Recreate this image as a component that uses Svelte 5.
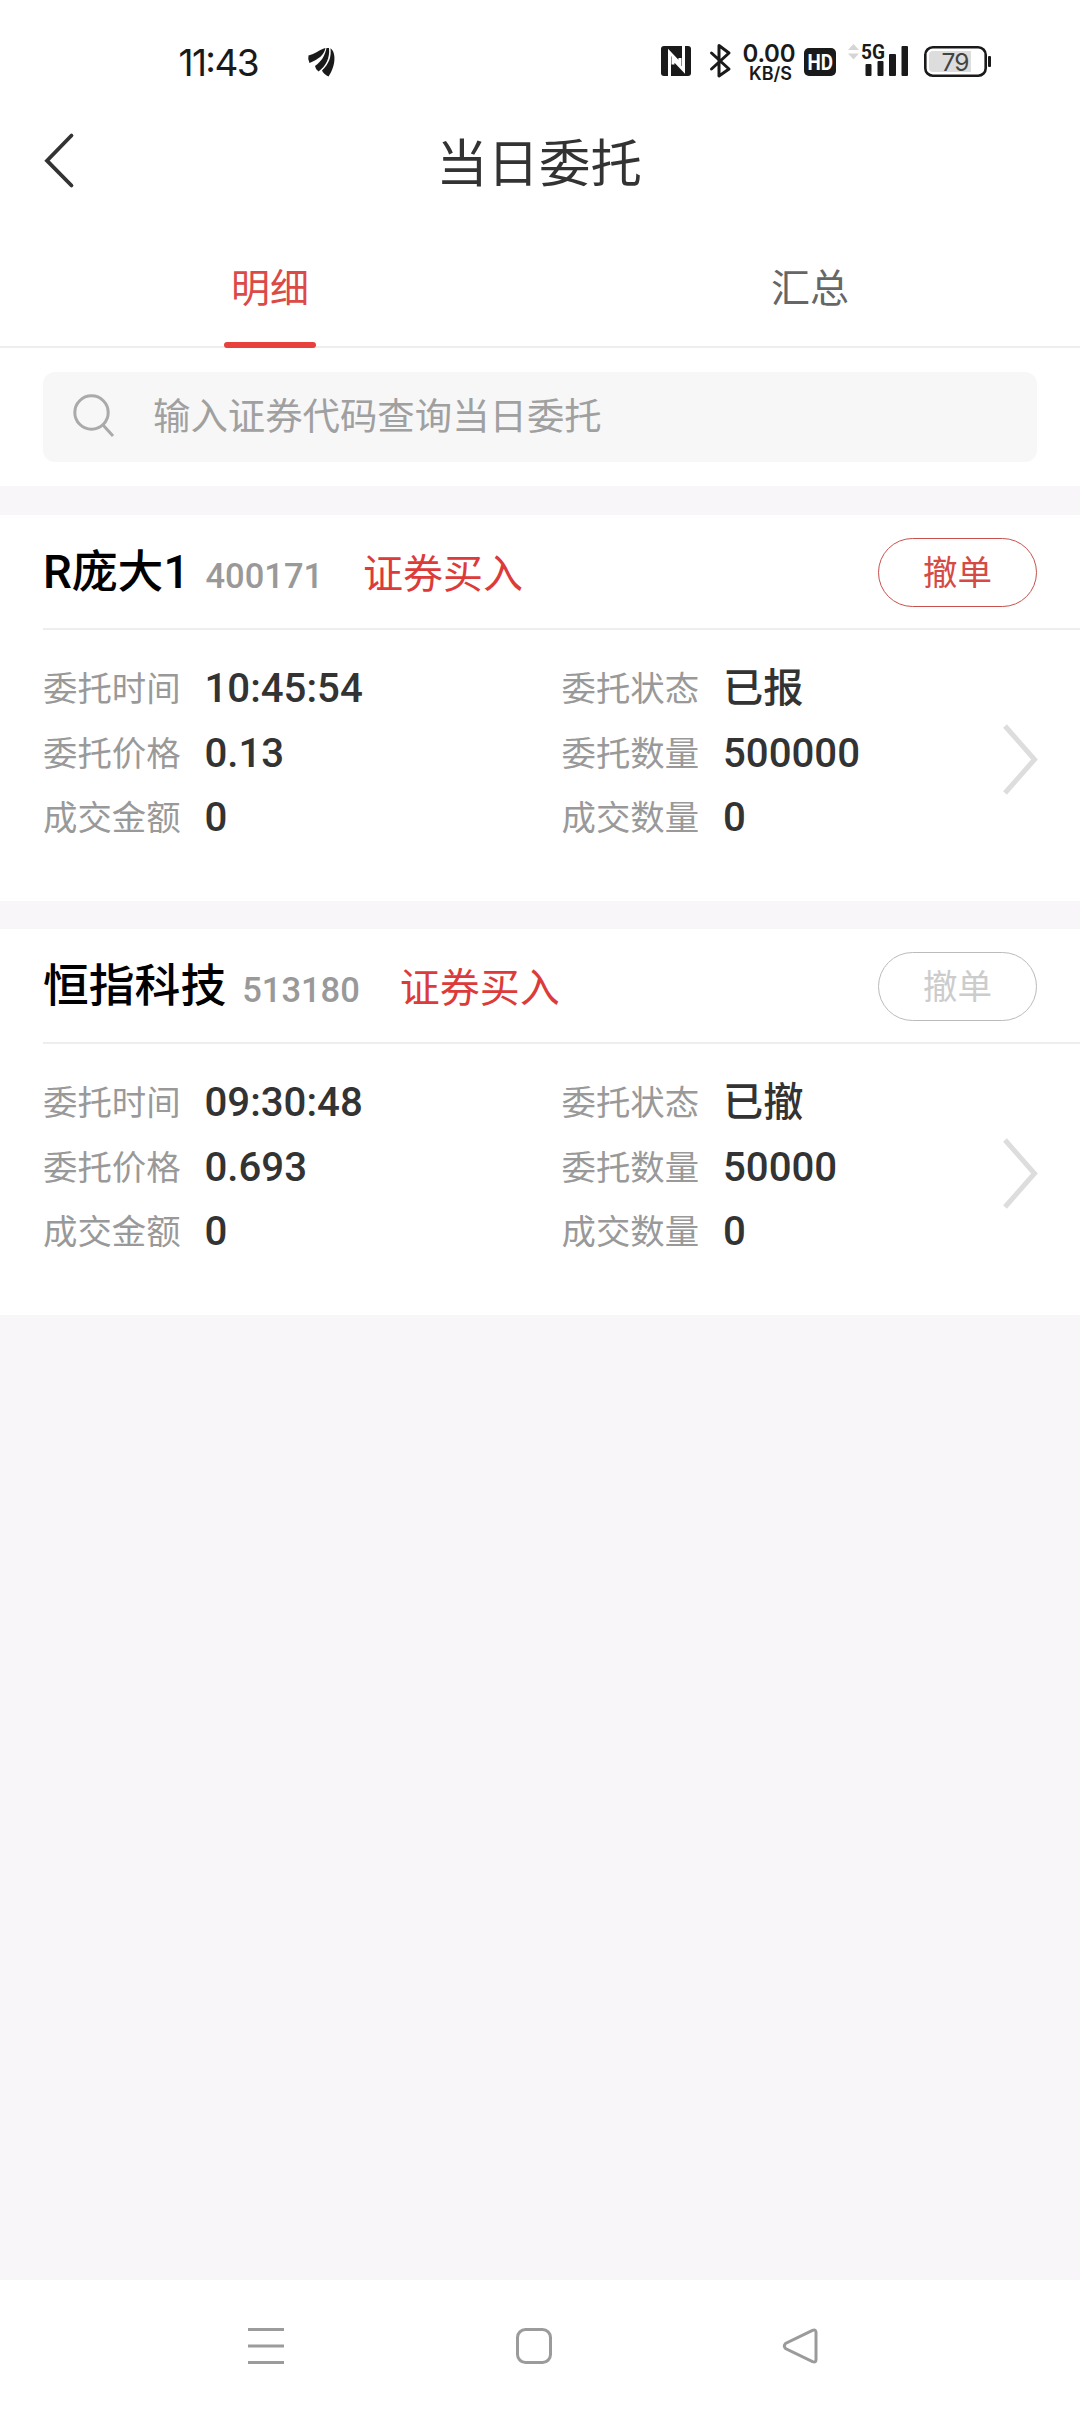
<!--
	Today's orders: status bar, title, detail/summary tabs, a search field and one card per
	order. Cards whose order is already withdrawn keep a greyed-out cancel button.
-->
<script lang="ts">
	type Order = {
		name: string;
		code: string;
		side: string;
		cancellable: boolean;
		fields: [string, string][];
	};

	const tabs = ['明细', '汇总'];

	const orders: Order[] = [
		{
			name: 'R庞大1',
			code: '400171',
			side: '证券买入',
			cancellable: true,
			fields: [
				['委托时间', '10:45:54'],
				['委托状态', '已报'],
				['委托价格', '0.13'],
				['委托数量', '500000'],
				['成交金额', '0'],
				['成交数量', '0']
			]
		},
		{
			name: '恒指科技',
			code: '513180',
			side: '证券买入',
			cancellable: false,
			fields: [
				['委托时间', '09:30:48'],
				['委托状态', '已撤'],
				['委托价格', '0.693'],
				['委托数量', '50000'],
				['成交金额', '0'],
				['成交数量', '0']
			]
		}
	];

	let activeTab = $state(0);
	let query = $state('');
</script>

<div class="screen">
	<div class="status-bar">
		<svg width="170" height="50" viewBox="170 36 170 50">
			<text class="clock" x="178.5" y="75.5" textLength="81" lengthAdjust="spacing">11:43</text>
			<path d="M308.5 55.5 C315 54 319 50 325.5 48 C324 55 319 59 309.5 63 Q307.500 59 308.500 55.500 Z" />
			<path d="M315 66 C321.500 61.500 325 55.500 326.500 48 L329 48 C330 58 326 66 318.500 71.500 Q315.500 69.500 315 66 Z" />
			<path d="M322 70.500 C329 64 331.500 57 330.500 48.300 C337 53 335 68 328.500 76.500 Q323.500 74 322 70.500 Z" />
		</svg>

		<svg width="350" height="50" viewBox="650 36 350 50">
			<rect x="661" y="46" width="30" height="30" rx="3" />
			<path class="cut" d="M669.5 76 V52.5 L680 63.500 V58 M683.5 46 V70 L673 59 V64.500" />

			<path class="bluetooth" d="M711.5 53 L729 69 L719 76 V45.5 L729 53 L711.5 69" />

			<text class="rate" x="742.5" y="62" font-size="24" textLength="53">0.00</text>
			<text class="rate" x="749" y="79.5" font-size="18" textLength="43">KB/S</text>

			<rect x="804" y="48" width="32" height="28" rx="5" />
			<text class="hd" x="807.5" y="70" font-size="22" textLength="25.5" lengthAdjust="spacingAndGlyphs">HD</text>

			<path class="idle" d="M848 50 L853.5 44 L859 50 Z M848 53.5 L853.5 59.5 L859 53.5 Z" />
			<rect x="865.5" y="64" width="6" height="12" rx="1" />
			<rect x="877.5" y="61" width="6" height="15" rx="1" />
			<rect x="889" y="54" width="7" height="22" rx="1" />
			<rect x="901.5" y="46" width="6.5" height="30" rx="1" />
			<text class="network" x="861" y="59" font-size="20.5" textLength="24" lengthAdjust="spacingAndGlyphs">5G</text>

			<rect class="battery" x="925.3" y="47.3" width="60.4" height="28.4" rx="7.5" />
			<path class="charge" d="M933 51 H971 V72 H933 Q929 72 929 68 V55 Q929 51 933 51 Z" />
			<rect x="988" y="56" width="3" height="11" rx="1" />
			<text class="level" x="941.5" y="70.5" font-size="24.5" textLength="28">79</text>
		</svg>
	</div>

	<header class="title-bar">
		<button type="button" class="back" aria-label="返回">
			<svg width="34" height="56" viewBox="0 0 34 56">
				<path d="M29.5 3.5 L5 28.7 L29.5 53.5" />
			</svg>
		</button>
		<h1>当日委托</h1>
	</header>

	<nav class="tabs">
		{#each tabs as tab, i}
			<button type="button" class="tab" class:active={activeTab === i} onclick={() => (activeTab = i)}>
				{tab}
			</button>
		{/each}
	</nav>

	<div class="search-area">
		<label class="search">
			<svg width="44" height="44" viewBox="0 0 44 44">
				<circle cx="18.5" cy="17.5" r="16.7" />
				<path d="M30 30 L40 41" />
			</svg>
			<input type="text" placeholder="输入证券代码查询当日委托" bind:value={query} />
		</label>
	</div>

	<main>
		{#each orders as order (order.code)}
			<section class="order">
				<div class="order-head">
					<span class="name">{order.name}</span>
					<span class="code">{order.code}</span>
					<span class="side">{order.side}</span>
					<button type="button" class="cancel" disabled={!order.cancellable}>撤单</button>
				</div>
				<div class="order-body">
					<dl>
						{#each order.fields as [label, value]}
							<div class="field">
								<dt>{label}</dt>
								<dd>{value}</dd>
							</div>
						{/each}
					</dl>
					<svg class="more" width="32" height="69" viewBox="0 0 32 69">
						<path d="M0 1 L29.5 34.5 L0 68" />
					</svg>
				</div>
			</section>
		{/each}
	</main>

	<footer class="system-nav">
		<svg width="36" height="36" viewBox="0 0 36 36">
			<path d="M0 1.5 H36 M0 18 H36 M0 34.5 H36" />
		</svg>
		<svg width="36" height="36" viewBox="0 0 36 36">
			<rect x="1.5" y="1.5" width="33" height="33" rx="8" />
		</svg>
		<svg width="36" height="36" viewBox="0 0 36 36">
			<path d="M28.5 2.3 L1.5 15.5 Q-1 18 1.5 20.5 L28.5 33.7 Q32 35 32 31.5 V4.5 Q32 1 28.5 2.3 Z" />
		</svg>
	</footer>
</div>

<style>
	:global(body) {
		background: #f8f6f9;
	}

	.screen {
		display: flex;
		flex-direction: column;
		width: 1080px;
		height: 2412px;
		background: #f8f6f9;
		color: #333;
		font-family: Roboto, 'Noto Sans CJK SC', sans-serif;
	}

	button,
	input {
		padding: 0;
		border: 0;
		background: none;
		color: inherit;
		font: inherit;
	}

	svg {
		display: block;
		flex: none;
		overflow: visible;
	}

	.status-bar {
		display: flex;
		justify-content: space-between;
		height: 74px;
		padding: 36px 80px 0 170px;
		background: #fff;
		fill: #1a1a1a;
	}

	.clock {
		font: 400 37px Inter, sans-serif;
	}

	.rate {
		font-family: Inter, sans-serif;
		font-weight: 600;
	}

	.cut {
		fill: none;
		stroke: #fff;
		stroke-width: 3;
	}

	.bluetooth {
		fill: none;
		stroke: #1a1a1a;
		stroke-width: 3;
		stroke-linejoin: round;
		stroke-linecap: round;
	}

	.hd {
		fill: #fff;
		font-weight: 700;
	}

	.idle {
		fill: #d5d5d5;
	}

	.network {
		font-weight: 700;
		stroke: #fff;
		stroke-width: 2;
		paint-order: stroke;
	}

	.battery {
		fill: none;
		stroke: #1a1a1a;
		stroke-width: 2.6;
	}

	.charge {
		fill: #ddd;
	}

	.level {
		fill: #444;
		font-family: Inter, sans-serif;
	}

	.title-bar {
		display: grid;
		grid-template-columns: 119px 1fr 121px;
		height: 106px;
		background: #fff;
	}

	.back {
		align-self: start;
		justify-self: start;
		margin: 22px 0 0 42px;
	}

	.back path {
		fill: none;
		stroke: #333;
		stroke-width: 3.8;
		stroke-linecap: round;
	}

	h1 {
		margin: 0;
		padding-top: 2px;
		font-size: 51.4px;
		font-weight: 400;
		line-height: 106px;
		text-align: center;
	}

	.tabs {
		display: flex;
		height: 130px;
		border-bottom: 2px solid #eee;
		background: #fff;
	}

	.tab {
		display: flex;
		flex: 1;
		flex-direction: column;
		align-items: center;
		justify-content: space-between;
		padding-top: 44px;
		color: #666;
		font-size: 39px;
		line-height: 58px;
	}

	.tab.active {
		color: #db4a46;
	}

	.tab.active::after {
		width: 92px;
		height: 6px;
		margin-bottom: -2px;
		border-radius: 3px;
		background: #e8403c;
		content: '';
	}

	.search-area {
		padding: 24px 43px;
		background: #fff;
	}

	.search {
		display: flex;
		align-items: center;
		height: 90px;
		padding-left: 30px;
		border-radius: 12px;
		background: #f7f7f7;
	}

	.search svg {
		fill: none;
		stroke: #aaa;
		stroke-width: 3;
	}

	.search input {
		flex: 1;
		margin-left: 36px;
		outline: none;
		font-size: 37.4px;
	}

	.search input::placeholder {
		color: #a0a0a0;
	}

	main {
		display: flex;
		flex-direction: column;
		gap: 28px;
		padding-top: 29px;
	}

	.order {
		height: 386px;
		background: #fff;
	}

	.order-head {
		display: flex;
		align-items: baseline;
		box-sizing: border-box;
		height: 115px;
		margin-left: 43px;
		padding: 23px 43px 0 0;
		border-bottom: 2px solid #eee;
	}

	.name {
		color: #000;
		font-size: 45.8px;
		font-weight: 500;
		line-height: 69px;
	}

	.code {
		margin-left: 16px;
		color: #999;
		font-size: 34.5px;
		font-weight: 500;
	}

	.side {
		margin-left: 40px;
		color: #dc3b3a;
		font-size: 40px;
	}

	.cancel {
		align-self: flex-start;
		box-sizing: border-box;
		width: 159px;
		height: 69px;
		margin-left: auto;
		padding-bottom: 5px;
		border: 1px solid #c9504c;
		border-radius: 35px;
		color: #d64a45;
		font-size: 34.5px;
	}

	.cancel:disabled {
		border-color: #bbb;
		color: #ccc;
	}

	.order-body {
		display: flex;
		padding: 27px 43px 0;
	}

	dl {
		display: grid;
		grid-template-columns: 518.5px 1fr;
		grid-auto-rows: 64.6px;
		flex: 1;
		margin: 0;
	}

	.field {
		display: flex;
		align-items: center;
		line-height: 64.6px;
	}

	dt {
		width: 161.5px;
		color: #999;
		font-size: 34.4px;
	}

	dd {
		margin: 0;
		font-size: 40.2px;
		font-weight: 500;
	}

	.more {
		margin-top: 68px;
		fill: none;
		stroke: #ddd;
		stroke-width: 5;
	}

	.system-nav {
		display: flex;
		gap: 232px;
		box-sizing: border-box;
		height: 132px;
		margin-top: auto;
		padding: 48px 0 0 248px;
		background: #fff;
		fill: none;
		stroke: #9b9b9b;
		stroke-width: 3;
	}
</style>
